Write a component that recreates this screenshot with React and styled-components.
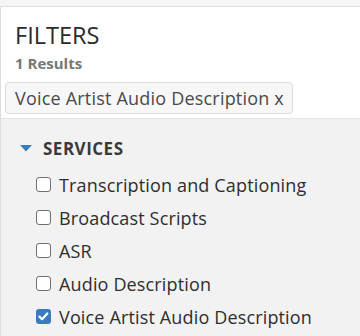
import React from 'react'
import styled, { createGlobalStyle } from 'styled-components'

const GlobalStyle = createGlobalStyle`
  body {
    margin: 0;
    background: #f6f6f6;
    font-family: "Open Sans", Lato, sans-serif;
    color: #2e2e2e;
  }
`

const Panel = styled.aside`
  margin-top: 6px;
  border-top: 1px solid #dedede;
  border-left: 1px solid #dedede;
  background: #ffffff;
  width: 360px;
  height: 329px;
  display: flex;
  flex-direction: column;
`

const Header = styled.div`
  padding: 13px 0 4px 4px;
  border-bottom: 1px solid #e3e3e3;
`

const Title = styled.h2`
  margin: 0 0 0 10px;
  font-size: 23.5px;
  font-weight: 400;
  line-height: 30px;
  color: #2a2a2a;
`

const Count = styled.div`
  margin: 3px 0 0 10px;
  font-size: 15px;
  font-weight: 700;
  color: #777;
  line-height: 20px;
`

const Chip = styled.span`
  display: inline-block;
  margin-top: 9px;
  padding: 0 8px 0 9px;
  height: 30px;
  line-height: 30px;
  border: 1px solid #dcdcdc;
  border-radius: 4px;
  background: #f7f7f7;
  font-size: 18px;
  letter-spacing: 0.2px;
  color: #4a4a4a;
`

const Body = styled.div`
  flex: 1;
  background: #f2f2f2;
  padding: 18px 0 0 19px;
`

const GroupTitle = styled.div`
  display: flex;
  align-items: center;
  gap: 11px;
  font-size: 17px;
  font-weight: 700;
  letter-spacing: 0.5px;
  color: #3a3a3a;
  height: 22px;
`

const List = styled.ul`
  list-style: none;
  margin: 0;
  padding: 9px 0 0 16px;
`

const Item = styled.li`
  display: flex;
  align-items: center;
  gap: 8px;
  height: 33px;
  font-size: 18px;
  letter-spacing: 0.15px;
  color: #2e2e2e;
`

const Box = styled.span`
  width: 15px;
  height: 15px;
  box-sizing: border-box;
  border-radius: 3px;
  border: ${p => (p.checked ? 'none' : '1.5px solid #707070')};
  background: ${p => (p.checked ? '#3b7bbd' : '#fff')};
  display: flex;
  align-items: center;
  justify-content: center;
  flex-shrink: 0;
`

const services = [
  { label: 'Transcription and Captioning', checked: false },
  { label: 'Broadcast Scripts', checked: false },
  { label: 'ASR', checked: false },
  { label: 'Audio Description', checked: false },
  { label: 'Voice Artist Audio Description', checked: true },
]

export default function App() {
  return (
    <>
      <GlobalStyle />
      <Panel>
        <Header>
          <Title>FILTERS</Title>
          <Count>1 Results</Count>
          <Chip>Voice Artist Audio Description x</Chip>
        </Header>
        <Body>
          <GroupTitle>
            <svg width="12" height="7" viewBox="0 0 12 7">
              <path d="M0 0 H12 L6 6.5 Z" fill="#3b7bbd" />
            </svg>
            SERVICES
          </GroupTitle>
          <List>
            {services.map(s => (
              <Item key={s.label}>
                <Box checked={s.checked}>
                  {s.checked && (
                    <svg width="11" height="9" viewBox="0 0 11 9">
                      <path d="M1.5 4.6 L4.1 7.2 L9.3 1.5" stroke="#fff" strokeWidth="2.2" fill="none" strokeLinecap="round" strokeLinejoin="round" />
                    </svg>
                  )}
                </Box>
                {s.label}
              </Item>
            ))}
          </List>
        </Body>
      </Panel>
    </>
  )
}
